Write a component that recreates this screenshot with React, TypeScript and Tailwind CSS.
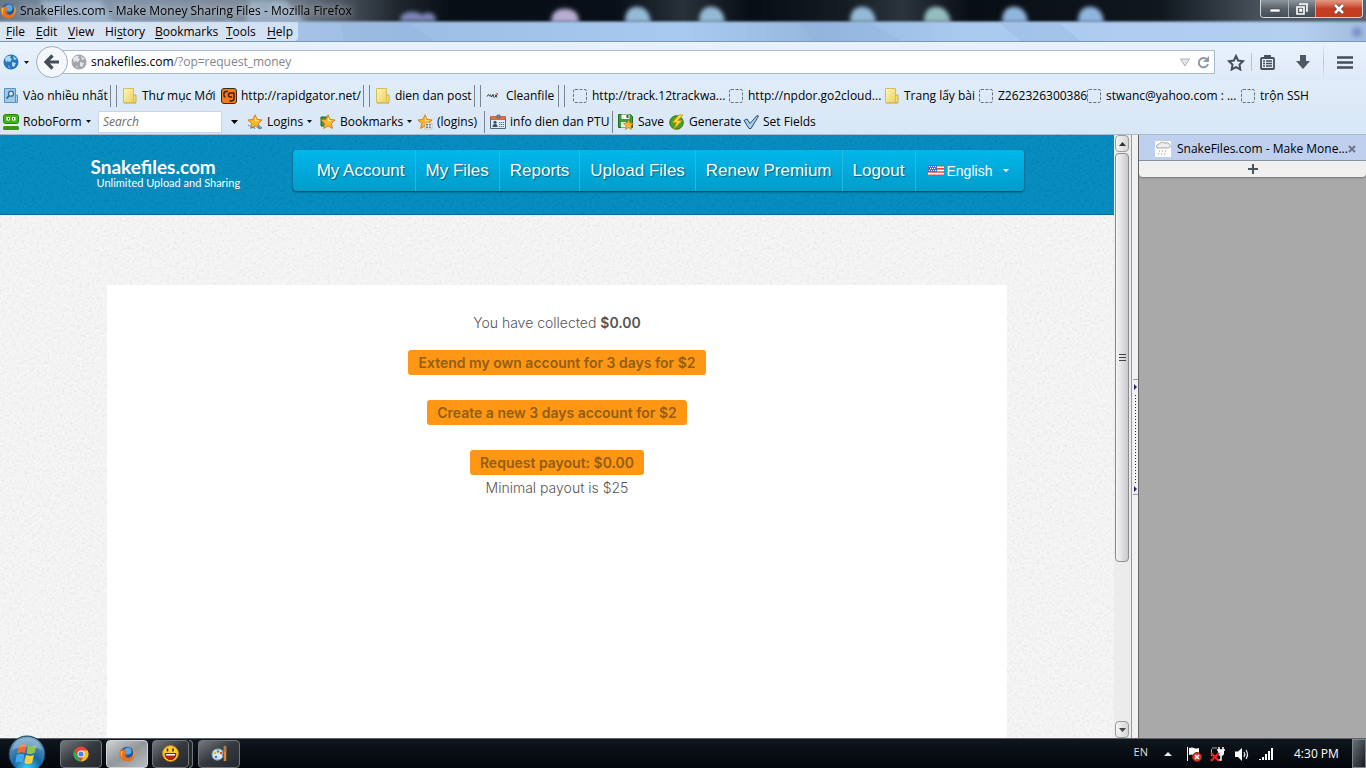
import type { ReactNode } from "react";

const ui = "font-['Open_Sans','Noto_Sans',sans-serif] text-[12px] leading-4";

function Caret({ className = "" }: { className?: string }) {
  return (
    <svg className={"shrink-0 " + className} width="5" height="3" viewBox="0 0 5 3" aria-hidden="true">
      <path d="M0 0h5L2.500 3z" fill="#111" />
    </svg>
  );
}

function Firefox({ size = 16 }: { size?: number }) {
  return (
    <svg width={size} height={size} viewBox="0 0 16 16" aria-hidden="true" className="shrink-0">
      <circle cx="8.300" cy="7.700" r="7" fill="#1c55a5" />
      <circle cx="9" cy="5" r="3.600" fill="#58a9e0" />
      <path d="M1.200 3.200C.2 6 .3 10 2.500 12.800c3 3.600 8.600 3.600 11.400.4 2-2.300 2.300-5.800 1.300-8.600-.2 3.900-2 6.900-5.400 7.100-2 .1-3.500-.9-4-2.100 1.100.5 2.300.1 3-.6-2.200.2-3-1.400-2.700-2.600.6-.4 1.500-.2 2-.9-.9-.3-1.900-1-1.700-1.900C4.300 3.300 3 3.800 2.600 4.600 2.200 4 1.500 3.700 1.200 3.200z" fill="#e8701a" />
      <path d="M2 5c-.7 2.700-.2 5.400 1.500 7.200C2.600 9.700 2.800 7 4 5.200z" fill="#fbc02d" />
      <path d="M13 2.500c2 2.600 1.700 7-.8 9.300 3.300-.8 4.200-5.500 2.800-7.500-.5-.8-1.200-1.400-2-1.800z" fill="#f9a825" />
    </svg>
  );
}

function Backdrop() {
  return (
    <svg className="absolute inset-0 h-full w-full" viewBox="0 0 1366 42" preserveAspectRatio="none" aria-hidden="true">
      <defs>
        <linearGradient id="top" x1="0" x2="1">
          <stop offset="0" stopColor="#68788c" />
          <stop offset=".08" stopColor="#8193a8" />
          <stop offset=".2" stopColor="#788594" />
          <stop offset=".25" stopColor="#4a535f" />
          <stop offset=".29" stopColor="#20272f" />
          <stop offset=".33" stopColor="#080e16" />
          <stop offset=".45" stopColor="#080f18" />
          <stop offset=".5" stopColor="#28303a" />
          <stop offset=".55" stopColor="#070d14" />
          <stop offset=".62" stopColor="#151c24" />
          <stop offset=".66" stopColor="#2b343e" />
          <stop offset=".71" stopColor="#080e15" />
          <stop offset=".85" stopColor="#10171f" />
          <stop offset=".92" stopColor="#46505a" />
          <stop offset="1" stopColor="#54606c" />
        </linearGradient>
        <linearGradient id="low" x1="0" x2="1">
          <stop offset="0" stopColor="#b6cce6" />
          <stop offset=".3" stopColor="#9dbee4" />
          <stop offset=".5" stopColor="#a9caf0" />
          <stop offset=".6" stopColor="#96b7de" />
          <stop offset=".7" stopColor="#a9c9ef" />
          <stop offset=".95" stopColor="#b4d0f0" />
          <stop offset="1" stopColor="#a0bbdd" />
        </linearGradient>
        <filter id="soft" x="-20%" y="-40%" width="140%" height="180%"><feGaussianBlur stdDeviation="2" /></filter>
        <filter id="edge" x="0" y="-30%" width="100%" height="160%"><feGaussianBlur stdDeviation="0 1" /></filter>
      </defs>
      <rect width="1366" height="42" fill="url(#top)" />
      <g filter="url(#soft)">
        <path d="M40 0h60l14 24H50zM250 0h36l20 24h-60z" fill="#a9bfd8" opacity=".6" />
        <path d="M400 22q0-10 12-10t14 10zM420 22q0-9 8-9t8 9z" fill="#7c86b8" />
        <path d="M551 23q0-14 14-14t14 14z" fill="#b8add2" />
        <path d="M625 23q0-16 12-16t14 16zM699 23q0-16 12-16t14 16zM850 23q0-16 12-16t14 16z" fill="#94bad5" />
        <path d="M924 23q0-16 12-16t15 16z" fill="#94bdbf" />
        <path d="M1002 23q0-16 12-16t14 16zM1078 23q0-16 12-16t14 16z" fill="#8fb6df" />
      </g>
      <rect y="22" width="1366" height="30" fill="url(#low)" filter="url(#edge)" />
      <path d="M340 24h70l24 18h-90zM800 24h70l32 18h-90zM1000 24h60l20 18h-60z" fill="#8badd6" opacity=".25" />
      <circle cx="1357" cy="33" r="5" fill="#7993c8" filter="url(#soft)" />
    </svg>
  );
}

function Folder() {
  return (
    <svg width="16" height="16" viewBox="0 0 16 16" className="shrink-0" aria-hidden="true">
      <defs><linearGradient id="fold" x1="0" x2="1" y2="1"><stop offset="0" stopColor="#fff6bd" /><stop offset="1" stopColor="#edd25a" /></linearGradient></defs>
      <path d="M11.500 7h2.500v7.500h-2.500z" fill="#f2df83" stroke="#cfae3c" />
      <path d="M1.500.5h10v14h-10z" fill="url(#fold)" stroke="#d8bc55" />
      <path d="M2 15.500h12" stroke="#a9adb0" opacity=".6" />
    </svg>
  );
}
function Dashed() {
  return (
    <svg width="16" height="16" viewBox="0 0 16 16" className="shrink-0" aria-hidden="true">
      <rect x="1.500" y="1.500" width="13" height="13" rx="1.500" fill="none" stroke="#6a7480" strokeDasharray="3 1.500" />
    </svg>
  );
}
function MostVisited() {
  return (
    <svg width="16" height="16" viewBox="0 0 16 16" className="shrink-0" aria-hidden="true">
      <path d="M12 7h2.500v7.500H12z" fill="#a9cdea" stroke="#5e93bd" />
      <path d="M1.500.5h11v14h-11z" fill="#9fcbea" stroke="#5b93bf" />
      <circle cx="8" cy="5.700" r="2.500" fill="#d6ebf8" stroke="#39678f" strokeWidth="1.300" />
      <path d="M6 7.800 3.500 10.500" stroke="#39678f" strokeWidth="1.800" />
    </svg>
  );
}
function Rapidgator() {
  return (
    <svg width="16" height="16" viewBox="0 0 16 16" className="shrink-0" aria-hidden="true">
      <rect x=".5" y=".5" width="15" height="15" rx="2.500" fill="#f47a20" stroke="#3d2a1d" />
      <path d="M7 3.500H5Q3 3.500 3 5.500v2q0 1.500 1.500 1.500M13 4.500v5.500q0 3-3 3H8.500M13 5H9.500Q7.500 5 7.500 7t2 2H11" fill="none" stroke="#382416" strokeWidth="1.500" />
    </svg>
  );
}
function Clean() {
  return (
    <svg width="16" height="16" viewBox="0 0 16 16" className="shrink-0" aria-hidden="true">
      <path d="M1 8.500 2.500 6.500 4 8.500M4.500 6.500l1 2.500L7 6.500l1 3M9 6.500l2 3M8.500 9.500l3-3" fill="none" stroke="#222" strokeWidth=".9" />
      <path d="M11 6.500V5" stroke="#d22" strokeWidth="1.300" />
    </svg>
  );
}
function Robo() {
  return (
    <svg width="16" height="16" viewBox="0 0 16 16" className="shrink-0" aria-hidden="true">
      <rect x=".5" y=".5" width="15" height="9" rx="2" fill="#3bb319" stroke="#268410" />
      <path d="M3.500 3h3.500v3.500H3.500zM9 3h3.500v3.500H9z" fill="#fff" />
      <path d="M5 4h1v1.500H5zM10 4h1v1.500h-1z" fill="#153b0c" />
      <path d="M1 10.500h14v2H1z" fill="#e7f7df" />
      <rect x="0" y="12" width="16" height="4" rx="1.500" fill="#2f9b12" />
    </svg>
  );
}
const starPath = "M8 .8l2.100 4.600 5 .6-3.700 3.400 1 5L8 12l-4.400 2.400 1-5L.9 6l5-.6z";
function Star({ kind }: { kind: "login" | "book" | "list" }) {
  return (
    <svg width="16" height="16" viewBox="0 0 16 16" className="shrink-0" aria-hidden="true">
      {kind === "book" && <path d="M1 3h6v9H1z" fill="#2e9a32" stroke="#1d6e27" />}
      <path d={starPath} fill="#fcb52c" stroke="#cf7a1b" strokeWidth=".9" />
      <path d="M8 2.500 9.500 6l3.500.5-5 1z" fill="#ffe784" />
      {kind === "login" && <path d="M1 11q3 1 4 3l2-1 1 2M11 11l4 3-3 1z" fill="#62abd9" stroke="#387cab" strokeWidth=".7" />}
      {kind === "list" && <><path d="M8 9h7v6H8z" fill="#f8fafb" stroke="#9ba3ab" strokeWidth=".6" /><path d="M9 10.500h5M9 12h5M9 13.500h5" stroke="#4d545c" strokeDasharray="2 .8" strokeWidth=".8" /></>}
    </svg>
  );
}
function IdCard() {
  return (
    <svg width="16" height="16" viewBox="0 0 16 16" className="shrink-0" aria-hidden="true">
      <path d="M.5 3.500h15v11H.5z" fill="#dcebf6" stroke="#52677b" />
      <path d="M.5 2.500h15v3H.5z" fill="#ea6b3c" stroke="#b5532c" strokeWidth=".7" />
      <path d="M7 1h3v3H7z" fill="#7e95a6" stroke="#465866" strokeWidth=".7" />
      <circle cx="5" cy="8.300" r="1.500" fill="#3a4e60" /><path d="M2.500 13q0-3 2.500-3t2.500 3z" fill="#3a4e60" />
      <path d="M9 8.500h5M9 10.500h5M9 12.500h5" stroke="#687b8b" strokeDasharray="1.300 .6" />
    </svg>
  );
}
function Save() {
  return (
    <svg width="16" height="16" viewBox="0 0 16 16" className="shrink-0" aria-hidden="true">
      <path d="M.5.500h12l2 2v11H.5z" fill="#3a9e38" stroke="#226b25" />
      <path d="M3.500.5h8V5h-8z" fill="#fff" /><path d="M8.500 1h2v3h-2z" fill="#2e5e33" /><path d="M3 8h5v5.500H3z" fill="#e5efe5" />
      <path d="m10.500 6 1.300 3 3.500.5-2.500 2.300.7 3.600-3-1.700-3 1.700.6-3.600L5.600 9.500 9 9z" fill="#ffb338" stroke="#d27718" strokeWidth=".7" />
    </svg>
  );
}
function Generate() {
  return (
    <svg width="16" height="16" viewBox="0 0 16 16" className="shrink-0" aria-hidden="true">
      <circle cx="7.500" cy="8.500" r="6.800" fill="#4aa121" stroke="#327817" />
      <path d="M10 1 3.500 8.500h4L5 15l8-8.500H8.500L14 1z" fill="#ffdd42" stroke="#d28b14" strokeWidth=".8" />
    </svg>
  );
}
function Check() {
  return (
    <svg width="16" height="16" viewBox="0 0 16 16" className="shrink-0" aria-hidden="true">
      <path d="M1 6.500 4 5l3 4.500 7-8 1.500.5L8 14.500H6z" fill="#a5d3ef" stroke="#2d4b70" />
    </svg>
  );
}
function Sep({ twice = false, className = "" }: { twice?: boolean; className?: string }) {
  return <span className={"flex h-[22px] shrink-0 gap-[5px] " + className}><i className="w-px bg-[#7c858f]" />{twice && <i className="w-px bg-[#7c858f]" />}</span>;
}
function Tool({ icon, label, className, caret = false }: { icon: ReactNode; label: string; className: string; caret?: boolean }) {
  return (
    <button className={"flex h-6 shrink-0 items-center gap-1 whitespace-nowrap text-left " + className}>
      {icon}<span>{label}</span>{caret && <Caret />}
    </button>
  );
}

function TitleArea() {
  const menus = [["F", "ile", ""], ["E", "dit", ""], ["V", "iew", ""], ["s", "tory", "Hi"], ["B", "ookmarks", ""], ["T", "ools", ""], ["H", "elp", ""]];
  const widths = ["w-[30px]", "w-8", "w-[37px]", "w-[50px]", "w-[71px]", "w-[41px]", "w-[34px]"];
  return (
    <header className="relative h-[42px] overflow-hidden border-b border-[#7b97b7]">
      <Backdrop />
      <div className="relative flex h-[22px] items-center justify-between">
        <div className="flex items-center gap-1 whitespace-nowrap"><Firefox /><h1 className="drop-shadow-[0_0_4px_#fff]">SnakeFiles.com - Make Money Sharing Files - Mozilla Firefox</h1></div>
        <div className="mr-[3px] flex h-[22px] items-start">
          <div className="flex h-[18px] overflow-hidden rounded-b border border-t-0 border-[#d3dae0]">
            <button aria-label="Minimize" className="flex w-7 items-center justify-center border-r border-[#aab1b8] bg-linear-to-b from-[#8f979e] via-[#59616a] to-[#454d56]"><svg width="12" height="8"><path d="M1 4h10v3H1z" fill="#fff" stroke="#414851" strokeWidth=".6" /></svg></button>
            <button aria-label="Restore" className="flex w-[27px] items-center justify-center border-r border-[#aab1b8] bg-linear-to-b from-[#8f979e] via-[#59616a] to-[#454d56]"><svg width="12" height="12" fill="none" stroke="#fff" strokeWidth="1.600"><path d="M4 2V1h7v7h-1M1 4h7v7H1zM4 6.500h1.500V8H4z" /></svg></button>
            <button aria-label="Close" className="flex w-[46px] items-center justify-center bg-linear-to-b from-[#e49a84] via-[#c53f25] to-[#c43c20]"><svg width="14" height="12"><path d="m3 2 8 8M11 2l-8 8" stroke="#474b55" strokeWidth="4" /><path d="m3 2 8 8M11 2l-8 8" stroke="#fff" strokeWidth="2.500" /></svg></button>
          </div>
        </div>
      </div>
      <nav className="relative flex h-[19px] w-[298px] items-center rounded-br bg-white/50">
        <div className="flex pl-1.5">
          {menus.map((m, i) => <button key={m[1]} className={"shrink-0 whitespace-nowrap text-left " + widths[i]}>{m[2]}<u className="underline-offset-2">{m[0]}</u>{m[1]}</button>)}
        </div>
      </nav>
    </header>
  );
}

function GlobeIcon({ color, land }: { color: string; land: string }) {
  return (
    <svg width="16" height="16" viewBox="0 0 16 16" className="shrink-0" aria-hidden="true">
      <circle cx="8" cy="8" r="7.500" fill={color} />
      <path d="M2 4q3-3 6-2L7 4l2 1-2 3-3-1-1 2zM9 8l4 1-2 4-2-1zM10 2l4 3-3 1zM5 11l2 2-1 1z" fill={land} />
    </svg>
  );
}

function NavBar() {
  return (
    <div className="flex h-10 items-center bg-linear-to-b from-[#e9f2fb] to-[#ddeaf8]">
      <button aria-label="Site menu" className="ml-[3px] flex w-[33px] shrink-0 items-center gap-[5px]"><GlobeIcon color="#2674bc" land="#a9dafa" /><Caret /></button>
      <button aria-label="Back" className="z-10 -mr-4 flex size-8 shrink-0 items-center justify-center rounded-full border border-[#9baec2] bg-[#f4f8fc]">
        <svg width="16" height="16" viewBox="0 0 16 16"><path d="M8.500 1.500 2 8l6.500 6.500M3 8h12" stroke="#434d59" strokeWidth="3.200" fill="none" /></svg>
      </button>
      <div className="flex h-6 min-w-0 flex-1 items-center border border-[#a9bccf] bg-white pl-[18px] pr-1">
        <GlobeIcon color="#a2a6aa" land="#e5e7e8" />
        <div className="relative ml-1 min-w-0 flex-1">
          <span aria-hidden="true" className="pointer-events-none absolute inset-y-0 left-0 whitespace-nowrap">snakefiles.com<span className="text-[#7f858c]">/?op=request_money</span></span>
          <input aria-label="Address" className="w-full bg-transparent text-transparent caret-black outline-none" defaultValue="snakefiles.com/?op=request_money" />
        </div>
        <svg width="10" height="9" className="mr-[7px]"><path d="M.5 1h9L5 8z" fill="#e4e8eb" stroke="#a9b2ba" /></svg>
        <button aria-label="Reload"><svg width="13" height="13" viewBox="0 0 13 13"><path d="M10 3.500A4.700 4.700 0 1 0 11 8" fill="none" stroke="#8f9aa5" strokeWidth="2" /><path d="M12 0v6H6z" fill="#8f9aa5" /></svg></button>
      </div>
      <div className="flex w-[151px] shrink-0 items-center">
        <button aria-label="Bookmark" className="ml-3"><svg width="18" height="17" viewBox="0 0 18 17"><path d="m9 2 2.100 4.500 4.900.7-3.500 3.400.8 4.900L9 13.200l-4.300 2.300.8-4.900L2 7.200l4.900-.7z" fill="none" stroke="#454f5a" strokeWidth="2" /></svg></button>
        <i className="ml-1.5 h-[18px] w-px bg-[#b5c3d1]" />
        <button aria-label="Bookmark list" className="ml-2"><svg width="15" height="15" viewBox="0 0 15 15"><path d="M5 3V1h5v2M2 3h11q1 0 1 1v9q0 1-1 1H2q-1 0-1-1V4q0-1 1-1z" fill="none" stroke="#454f5a" strokeWidth="1.800" /><path d="M3 6h2M3 8.500h2M3 11h2M6 6h6M6 8.500h6M6 11h6" stroke="#454f5a" strokeWidth="1.500" /></svg></button>
        <button aria-label="Downloads" className="ml-5"><svg width="16" height="15" viewBox="0 0 16 15"><path d="M5 0h6v6h4l-7 8-7-8h4z" fill="#4e5863" /></svg></button>
        <i className="ml-3 h-9 w-px bg-linear-to-b from-transparent via-[#b5c3d1] to-transparent" />
        <button aria-label="Menu" className="ml-[13px]"><svg width="16" height="13"><path d="M0 1.500h16M0 6.500h16M0 11.500h16" stroke="#454f5a" strokeWidth="2.500" /></svg></button>
      </div>
    </div>
  );
}

function Toolbars() {
  return (
    <div className="border-b border-[#a9bccf] bg-linear-to-b from-[#dfecf9] to-[#d8e7f6]">
      <div className="flex h-[27px] items-center overflow-hidden pl-[3px]">
        <Tool icon={<MostVisited />} label="Vào nhiều nhất" className="w-[107px]" />
        <Sep twice className="w-3" />
        <Tool icon={<Folder />} label="Thư mục Mới" className="w-[99px]" />
        <Tool icon={<Rapidgator />} label="http://rapidgator.net/" className="w-[142px]" />
        <Sep twice className="w-3" />
        <Tool icon={<Folder />} label="dien dan post" className="w-[99px]" />
        <Sep twice className="w-3" />
        <Tool icon={<Clean />} label="Cleanfile" className="w-[72px]" />
        <Sep twice className="w-3.5" />
        <Tool icon={<Dashed />} label="http://track.12trackwa..." className="w-[156px]" />
        <Tool icon={<Dashed />} label="http://npdor.go2cloud..." className="w-[156px]" />
        <Tool icon={<Folder />} label="Trang lấy bài" className="w-[94px]" />
        <Tool icon={<Dashed />} label="Z262326300386" className="w-[108px]" />
        <Tool icon={<Dashed />} label="stwanc@yahoo.com : ..." className="w-[154px]" />
        <Tool icon={<Dashed />} label="trộn SSH" className="w-20" />
      </div>
      <div className="flex h-[25px] items-center overflow-hidden pl-[3px]">
        <Tool icon={<Robo />} label="RoboForm" className="w-[95px]" caret />
        <input aria-label="Search" placeholder="Search" className="h-[22px] w-[124px] shrink-0 border border-[#cbd5df] bg-white px-1 italic placeholder:text-[#6d6d6d]" />
        <button aria-label="Search options" className="flex w-[25px] shrink-0 justify-center"><svg width="7" height="4"><path d="M0 0h7L3.500 4z" /></svg></button>
        <Tool icon={<Star kind="login" />} label="Logins" className="w-[73px]" caret />
        <Tool icon={<Star kind="book" />} label="Bookmarks" className="w-[97px]" caret />
        <Tool icon={<Star kind="list" />} label="(logins)" className="w-[67px]" />
        <Sep className="w-1.5" />
        <Tool icon={<IdCard />} label="info dien dan PTU" className="w-[122px]" />
        <Sep className="w-1.5" />
        <Tool icon={<Save />} label="Save" className="w-[51px]" />
        <Tool icon={<Generate />} label="Generate" className="w-[74px]" />
        <Tool icon={<Check />} label="Set Fields" className="w-[90px]" />
      </div>
    </div>
  );
}

function Grain({ id, opacity }: { id: string; opacity: string }) {
  return (
    <svg className={"pointer-events-none absolute inset-0 h-full w-full " + opacity} aria-hidden="true">
      <filter id={id}><feTurbulence type="fractalNoise" baseFrequency=".4" numOctaves="3" /><feColorMatrix values="2 0 0 0 -.5  2 0 0 0 -.5  2 0 0 0 -.5  0 0 0 0 1" /></filter>
      <rect width="100%" height="100%" filter={"url(#" + id + ")"} />
    </svg>
  );
}

function Flag() {
  return (
    <svg width="16" height="11" viewBox="0 0 16 11" aria-hidden="true">
      <path d="M0 0h16v11H0z" fill="#fff" /><path d="M0 .8h16M0 3.900h16M0 7h16M0 10.200h16" stroke="#e64a45" strokeWidth="1.600" />
      <path d="M0 0h9v7H0z" fill="#4270d8" /><path d="M1 1.500h7M2 3.500h6M1 5.500h7" stroke="#fff" strokeDasharray="1 1" />
    </svg>
  );
}

function Site() {
  const links = ["My Account", "My Files", "Reports", "Upload Files", "Renew Premium", "Logout"];
  const action = "block rounded-[3px] bg-[#ff9715] px-2.5 text-[14px] leading-[25px] font-semibold text-[#915e12]";
  return (
    <main className="relative flex min-w-0 flex-1 flex-col overflow-hidden bg-[#f7f7f7]">
      <Grain id="paper" opacity="opacity-5" />
      <header className="relative h-20 shrink-0 border-b border-[#006f9f] bg-[#0089bd]">
        <Grain id="cloth" opacity="opacity-[0.04]" />
        <div className="relative mx-auto flex max-w-[933px] items-start justify-between pt-[15px]">
          <a href="#home" className="pt-1.5 whitespace-nowrap text-white">
            <strong className="block font-['Lato',sans-serif] text-[19px] leading-[22px] font-bold">Snakefiles.com</strong>
            <span className="-mt-px block pl-1.5 font-['Lato',sans-serif] text-[11px] leading-3">Unlimited Upload and Sharing</span>
          </a>
          <nav className="flex h-[41px] items-stretch overflow-hidden rounded bg-linear-to-b from-[#00b7eb] to-[#009dca] font-['Liberation_Sans',sans-serif] text-[17px] whitespace-nowrap text-white shadow-[0_1px_2px_#003b50] [text-shadow:1px_1px_1px_#075d7a]">
            {links.map((link, i) => <a key={link} href="#account" className={"flex items-center border-r border-[#26b8df] px-2.5 " + (i === 0 ? "pl-6" : "")}>{link}</a>)}
            <button className="flex w-[108px] items-center gap-[3px] pl-3 text-[14px]"><Flag /><span>English</span><svg className="ml-2" width="6" height="3"><path d="M0 0h6L3 3z" fill="#fff" /></svg></button>
          </nav>
        </div>
      </header>
      <section className="relative mx-auto mt-[70px] flex w-full max-w-[900px] flex-1 flex-col items-center bg-white pt-[25px] font-['Inter',sans-serif] text-[14px] leading-[25px] font-light text-[#555]">
        <p>You have collected <b className="font-semibold">$0.00</b></p>
        <div className="mt-[15px] flex flex-col items-center gap-[25px]">
          <button className={action}>Extend my own account for 3 days for $2</button>
          <button className={action}>Create a new 3 days account for $2</button>
          <button className={action}>Request payout: $0.00</button>
        </div>
        <p>Minimal payout is $25</p>
      </section>
    </main>
  );
}

function Scrollbar() {
  const end = "flex h-[17px] shrink-0 items-center justify-center rounded-sm border border-[#9b9b9f] bg-linear-to-r from-[#f5f5f5] to-[#d5d5d8]";
  return (
    <div className="flex w-[18px] shrink-0 flex-col border-r border-[#96989a] bg-[#ececec] pr-0.5 pl-px">
      <button aria-label="Scroll up" className={end}><svg width="7" height="4"><path d="M0 4h7L3.500 0z" fill="#333" /></svg></button>
      <div className="mt-px flex h-[409px] min-h-0 items-center justify-center rounded-sm border border-[#8b8b90] bg-linear-to-r from-[#f5f5f5] via-[#e1e1e4] to-[#c7c7ce]">
        <svg width="7" height="9"><path d="M0 1.500h7M0 4.500h7M0 7.500h7" stroke="#444" /></svg>
      </div>
      <div className="flex-1" />
      <button aria-label="Scroll down" className={end}><svg width="7" height="4"><path d="M0 0h7L3.500 4z" fill="#444" /></svg></button>
    </div>
  );
}

function SidePanel() {
  return (
    <aside className="w-[227px] shrink-0 bg-[#a9a9a9]">
      <div className="flex h-[26px] items-center border-b border-[#8c94a3] bg-[#bfcfee] pt-0.5 pr-2.5 pl-4 whitespace-nowrap">
        <svg width="16" height="16" viewBox="0 0 16 16" className="mr-1.5 shrink-0"><path d="M0 0h16v16H0z" fill="#fff" /><path d="M2 7Q0 4 4 3q2-3 6-1 4-1 5 2 1 3-3 3z" fill="#eee" stroke="#a7a7a7" /><path d="m5 9-2 6M8 9l-2 6M11 9l-2 6" stroke="#bbb" strokeDasharray="2 1" /></svg>
        <span className="min-w-0 flex-1">SnakeFiles.com - Make Mone...</span>
        <button aria-label="Close tab"><svg width="8" height="8"><path d="m1 1 6 6M7 1 1 7" stroke="#6c7888" strokeWidth="2" /></svg></button>
      </div>
      <button aria-label="New tab" className="flex h-4 w-full items-center justify-center rounded-b bg-[#f0f0f0] shadow-[0_1px_2px_#777]"><svg width="10" height="10"><path d="M5 0v10M0 5h10" stroke="#485260" strokeWidth="2" /></svg></button>
    </aside>
  );
}

function Taskbar() {
  const app = "flex h-7 shrink-0 items-center justify-center rounded-sm border border-[#71767b] bg-linear-to-br from-[#777b80] via-[#34383d] to-[#252a2e]";
  return (
    <footer className="z-10 flex h-[30px] shrink-0 items-center border-t border-[#59636d] bg-linear-to-b from-[#10161d] to-[#03070c] text-white">
      <button aria-label="Start" className="-my-1 ml-2 size-[38px] shrink-0">
        <svg width="38" height="38" viewBox="0 0 38 38">
          <defs><radialGradient id="orb" cx=".5" cy=".9" r=".85"><stop offset="0" stopColor="#40d0f8" /><stop offset=".45" stopColor="#1567a4" /><stop offset="1" stopColor="#6e9fbd" /></radialGradient></defs>
          <circle cx="19" cy="19" r="18" fill="url(#orb)" stroke="#173955" />
          <path d="M11 11q4-3 7.500-1L17 18q-4-1.500-8 .5z" fill="#ee6a32" /><path d="M20 10.500q4 2 8.500-.5l-2 8q-4 2-8 .5z" fill="#8dc448" />
          <path d="M8.500 20q4-2 8-.5l-1.700 8q-3.500-1.500-7.500.5z" fill="#45a6ea" /><path d="M18 20q4 1.500 8 0l-2 8q-4 1.800-7.700 0z" fill="#ffcc3e" />
          <path d="M4 15Q7 3 19 3t15 12q-14-7-30 0z" fill="#fff" opacity=".25" />
        </svg>
      </button>
      <button aria-label="Chrome" className={app + " ml-3.5 w-[42px]"}>
        <svg width="16" height="16" viewBox="0 0 16 16"><circle cx="8" cy="8" r="7.500" fill="#e94235" /><path d="M1.500 4.200 6 12l2 3.500A7.500 7.500 0 0 1 1.500 4.200z" fill="#31a653" /><path d="M8 4.500h6.600A7.500 7.500 0 0 1 8 15.500l3-6z" fill="#fbc116" /><circle cx="8" cy="8" r="3.500" fill="#fff" /><circle cx="8" cy="8" r="2.600" fill="#4285e8" /></svg>
      </button>
      <button aria-label="Firefox" className="ml-1 flex h-7 w-[42px] shrink-0 items-center justify-center rounded-sm border border-[#d2d4d5] bg-linear-to-br from-[#d0d2d3] via-[#92979a] to-[#b9bdc0]"><Firefox /></button>
      <button aria-label="Messenger" className={app + " ml-1 w-[37px]"}>
        <svg width="17" height="17" viewBox="0 0 17 17"><circle cx="8.500" cy="8.500" r="7.800" fill="#ffce2e" stroke="#e89417" /><path d="M5.500 3.500v3M11 3.500v3" stroke="#382b13" strokeWidth="1.600" /><path d="M3 8.500h11q-.5 6-5.500 6T3 8.500z" fill="#b9231e" stroke="#5c220d" /><path d="M4 9h9v1.500H4z" fill="#fff" /></svg>
      </button>
      <i className="h-7 w-1 shrink-0 rounded-r-sm border border-l-0 border-[#71767b] bg-[#25292e]" />
      <button aria-label="Paint" className={app + " ml-[5px] w-[42px]"}>
        <svg width="17" height="17" viewBox="0 0 17 17"><path d="M1 10Q1 4 7 4q5 0 5 4-1 2 0 4-3 4-7 3-4-1-4-5z" fill="#d7e8f4" stroke="#79a0bd" /><circle cx="4" cy="8" r="1.300" fill="#ddb81e" /><circle cx="7" cy="6.500" r="1.300" fill="#36a548" /><circle cx="10" cy="8" r="1.200" fill="#df4038" /><circle cx="5" cy="12" r="1.300" fill="#337dd4" /><path d="M14 7v9" stroke="#e8842e" strokeWidth="2.500" /><path d="m12.500 1.500 1.500-1L15.500 1.500V7h-3z" fill="#b57a48" /></svg>
      </button>
      <div className="ml-auto flex h-full shrink-0 items-center">
        <span className="mr-4 pb-1 text-[11px] leading-4 text-[#e3dfd2]">EN</span>
        <button aria-label="Show hidden icons" className="mr-3.5"><svg width="8" height="4"><path d="M0 4h8L4 0z" fill="#e9eef3" /></svg></button>
        <svg width="16" height="16" viewBox="0 0 16 16" className="mr-2"><path d="M1.500 1v14" stroke="#fff" /><path d="M3 2q3-1 5 0 2 1 5 0v7Q9 10 8 9 5 8 3 9z" fill="#fff" /><circle cx="11" cy="11" r="4.500" fill="#d73728" stroke="#9e1e18" /><path d="m9 9 4 4M13 9l-4 4" stroke="#fff" strokeWidth="1.600" /></svg>
        <svg width="16" height="16" viewBox="0 0 16 16" className="mr-2"><path d="M2 2h5M1.500 3v7" stroke="#aaa" /><path d="M8 4v3q0 3 3 3t3-3V4z" fill="#fff" /><path d="M7 4h8M9 1v3M13 1v3M11 10v4H7" fill="none" stroke="#fff" strokeWidth="1.500" /><path d="m1 7 8 8M9 7l-8 8" stroke="#f2221d" strokeWidth="2.200" /></svg>
        <svg width="16" height="16" viewBox="0 0 16 16" className="mr-2"><path d="M1 5.500h3L8 2v13l-4-4H1z" fill="#fff" /><path d="M10 6q1.500 2.500 0 5M12 4q3 4.500 0 9" stroke="#e4e7e9" fill="none" strokeWidth="1.200" /></svg>
        <svg width="16" height="14" viewBox="0 0 16 14" className="mr-5"><path d="M1 12h2v1H1zM4 10h2v3H4zM7 7h2v6H7zM10 4h2v9h-2zM13 1h2v12h-2z" fill="#fff" /></svg>
        <time className="w-[58px] whitespace-nowrap">4:30 PM</time>
        <button aria-label="Show desktop" className="h-[29px] w-[14px] border border-[#7c858d] bg-linear-to-br from-[#6b7176] to-[#181d21]" />
      </div>
    </footer>
  );
}

export default function App() {
  return (
    <div className={"flex h-screen flex-col overflow-hidden bg-[#d9e8f7] text-black " + ui}>
      <TitleArea />
      <NavBar />
      <Toolbars />
      <div className="flex min-h-0 flex-1">
        <Site />
        <Scrollbar />
        <div className="flex w-[7px] shrink-0 items-center justify-center border-r border-[#60646a] bg-[#f1f1f1]">
          <svg width="5" height="116" viewBox="0 0 5 116"><path d="M0 .5h5M0 115.500h5" stroke="#999" /><path d="M1 5v6l3-3zM1 107v6l3-3z" fill="#22285d" /><path d="M2.500 16v88" stroke="#22285d" strokeDasharray="1 2" /></svg>
        </div>
        <SidePanel />
      </div>
      <Taskbar />
    </div>
  );
}
